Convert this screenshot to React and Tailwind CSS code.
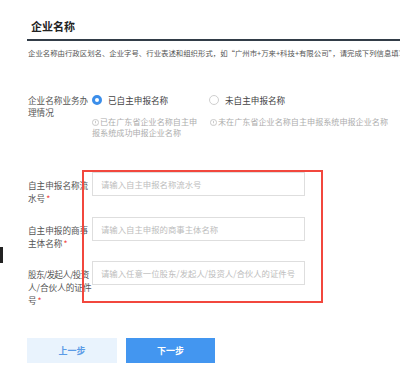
import { useState } from 'react'

function Radio({ checked, label, onClick }) {
  return (
    <div className="flex items-center cursor-pointer h-[12px]" onClick={onClick}>
      {checked ? (
        <span className="w-[10px] h-[10px] rounded-full border-[3px] border-[#3b8eea] bg-white shrink-0" />
      ) : (
        <span className="w-[10px] h-[10px] rounded-full border border-[#cfcfcf] bg-white shrink-0" />
      )}
      <span className="ml-[6px] text-[8.6px] leading-[12px] text-[#444] whitespace-nowrap">{label}</span>
    </div>
  )
}

function InfoIcon() {
  return (
    <svg className="inline-block w-[7px] h-[7px] mr-[1px] -mt-[1px] align-middle" viewBox="0 0 10 10" fill="none" stroke="#b5b5b5" strokeWidth="1">
      <circle cx="5" cy="5" r="4.4" />
      <path d="M5 2.6v3.2M5 6.9v0.7" />
    </svg>
  )
}

// label lines are split by hand, the last one gets the red star
function FieldRow({ lines, placeholder, className, tight }) {
  return (
    <div className={`flex ${className}`}>
      <div className="w-[64px] shrink-0 pt-[6.5px] text-[8.6px] leading-[13px] text-[#555]">
        {lines.map((line, i) => (
          <div key={i} className={i === 0 && tight ? 'whitespace-nowrap tracking-[-0.7px]' : 'whitespace-nowrap'}>
            {line}
            {i === lines.length - 1 && <span className="text-[#f0413b] ml-[1px]">*</span>}
          </div>
        ))}
      </div>
      <input
        className="w-[213px] h-[24px] border border-[#dedede] px-[8px] text-[8.4px] text-[#333] outline-none placeholder:text-[#bdbdbd]"
        placeholder={placeholder}
      />
    </div>
  )
}

export default function App() {
  const [applied, setApplied] = useState(true)

  return (
    <div className="relative w-[400px] h-[379px] overflow-hidden bg-white font-['Noto_Sans_CJK_SC',sans-serif]">
      <div className="pt-[18px] pl-[31px] text-[11px] leading-[17px] font-bold text-[#222]">企业名称</div>
      <div className="ml-[27px] mt-[4px] h-[2px] bg-[#323c47]" />
      <div className="ml-[28px] mt-[7px] text-[7.4px] leading-[10px] text-[#555] whitespace-nowrap overflow-hidden">
        企业名称由行政区划名、企业字号、行业表述和组织形式，如“广州市+万来+科技+有限公司”，请完成下列信息填写
      </div>

      {/* 业务办理情况 */}
      <div className="flex ml-[28px] mt-[36px]">
        <div className="w-[64px] shrink-0 text-[8.6px] leading-[12px] text-[#555]">
          <div className="whitespace-nowrap">企业名称业务办</div>
          <div>理情况</div>
        </div>
        <div className="flex flex-col">
          <div className="flex">
            <div className="w-[117px]">
              <Radio checked={applied} label="已自主申报名称" onClick={() => setApplied(true)} />
            </div>
            <Radio checked={!applied} label="未自主申报名称" onClick={() => setApplied(false)} />
          </div>
          <div className="flex mt-[10px] text-[8.1px] leading-[11px] text-[#adadad]">
            <div className="w-[118px]">
              <div className="whitespace-nowrap"><InfoIcon />已在广东省企业名称自主申</div>
              <div className="whitespace-nowrap">报系统成功申报企业名称</div>
            </div>
            <div className="whitespace-nowrap">
              <InfoIcon />未在广东省企业名称自主申报系统申报企业名称
            </div>
          </div>
        </div>
      </div>

      {/* 表单 */}
      <div className="ml-[28px] mt-[34px] flex flex-col">
        <FieldRow className="h-[45px]" lines={['自主申报名称流', '水号']} placeholder="请输入自主申报名称流水号" />
        <FieldRow className="h-[44px]" lines={['自主申报的商事', '主体名称']} placeholder="请输入自主申报的商事主体名称" />
        <FieldRow className="h-[45px]" tight lines={['股东/发起人/投资', '人/合伙人的证件', '号']} placeholder="请输入任意一位股东/发起人/投资人/合伙人的证件号" />
      </div>

      <div className="flex ml-[27px] mt-[32px] gap-[9px]">
        <button className="w-[90px] h-[25px] bg-[#e9f3fd] text-[#5b9be6] text-[9px] font-bold">上一步</button>
        <button className="w-[89px] h-[25px] bg-[#4396f0] text-white text-[9px] font-bold">下一步</button>
      </div>

      {/* 标注框 */}
      <div className="absolute left-[82px] top-[170px] w-[241px] h-[133px] border-2 border-[#f2473d] pointer-events-none" />
      <div className="absolute left-0 top-[247px] w-[3px] h-[16px] bg-[#222]" />
    </div>
  )
}
